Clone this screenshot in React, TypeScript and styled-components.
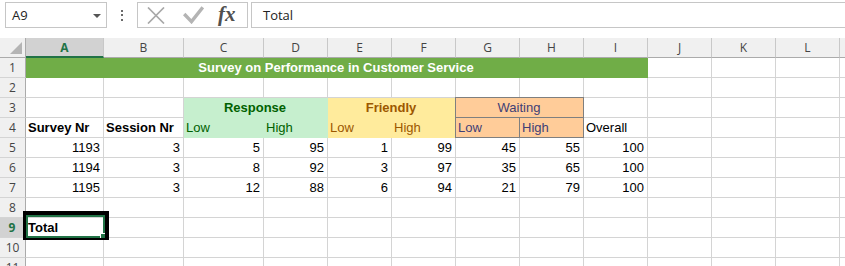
import React from "react";
import styled, { createGlobalStyle, css } from "styled-components";

const GlobalStyle = createGlobalStyle`
  html, body { margin: 0; padding: 0; background: #ffffff; overflow: hidden; }
  #root { width: 845px; height: 266px; overflow: hidden; }
`;

const Page = styled.div`
  width: 845px;
  height: 266px;
  overflow: hidden;
  background: #ffffff;
`;

/* ---------- formula bar ---------- */
const FormulaBar = styled.div`
  display: flex;
  align-items: flex-start;
  height: 38px;
  padding-top: 2px;
  box-sizing: border-box;
  font-family: "Open Sans", "Noto Sans", sans-serif;
`;

const NameBox = styled.div`
  margin-left: 5px;
  width: 102px;
  height: 26px;
  box-sizing: border-box;
  border: 1px solid #c6c6c6;
  display: flex;
  align-items: center;
  justify-content: space-between;
  padding: 0 5px 0 6px;
  font-size: 13px;
  color: #222;
`;

const DropArrow = styled.span`
  width: 0;
  height: 0;
  border-left: 4px solid transparent;
  border-right: 4px solid transparent;
  border-top: 4px solid #555;
  margin-top: 1px;
`;

const Grip = styled.div`
  width: 30px;
  height: 26px;
  display: flex;
  flex-direction: column;
  align-items: center;
  justify-content: center;
  gap: 2.5px;
`;

const GripDot = styled.span`
  width: 2px;
  height: 2px;
  background: #6a6a6a;
`;

const ButtonBox = styled.div`
  width: 111px;
  height: 26px;
  box-sizing: border-box;
  border: 1px solid #c6c6c6;
  display: flex;
  align-items: center;
  padding-left: 9px;
`;

const IconSlot = styled.span<{ $w: number }>`
  width: ${(p) => p.$w}px;
  display: flex;
  align-items: center;
`;

const Fx = styled.span`
  font-family: "Liberation Serif", "DejaVu Serif", serif;
  font-style: italic;
  font-weight: 700;
  font-size: 21px;
  color: #505050;
  line-height: 1;
  margin-top: -2px;
`;

const FormulaInput = styled.div`
  flex: 1;
  margin-left: 3px;
  margin-right: -3px;
  height: 26px;
  box-sizing: border-box;
  border: 1px solid #c6c6c6;
  display: flex;
  align-items: center;
  padding-left: 11px;
  font-size: 13px;
  color: #222;
`;

/* ---------- sheet grid ---------- */
const Sheet = styled.div`
  position: relative;
  display: grid;
  grid-template-columns: 26px 78px 80px 80px repeat(10, 64px);
  grid-auto-rows: 20px;
  width: 904px;
`;

const HeaderBase = css`
  box-sizing: border-box;
  background: #f0f0f0;
  font-family: "Open Sans", "Noto Sans", sans-serif;
  font-size: 12px;
  color: #444;
  display: flex;
  align-items: center;
  justify-content: center;
`;

const Corner = styled.div`
  ${HeaderBase};
  border-right: 1px solid #ababab;
  border-bottom: 1px solid #ababab;
  justify-content: flex-end;
  align-items: flex-end;
  padding: 0 3px 3px 0;
`;

const ColHeader = styled.div<{ $selected?: boolean }>`
  ${HeaderBase};
  border-right: 1px solid #c8c8c8;
  border-bottom: 1px solid #ababab;
  ${(p) =>
    p.$selected &&
    css`
      background: #d2d2d2;
      color: #217346;
      font-weight: 700;
      border-bottom: 2px solid #217346;
    `}
`;

const RowHeader = styled.div<{ $selected?: boolean }>`
  ${HeaderBase};
  border-right: 1px solid #ababab;
  border-bottom: 1px solid #d4d4d4;
  ${(p) =>
    p.$selected &&
    css`
      background: #d2d2d2;
      color: #217346;
      font-weight: 700;
      border-right: 2px solid #217346;
    `}
`;

type Variant = "plain" | "title" | "good" | "neutral" | "input";

const variantStyles: Record<Variant, ReturnType<typeof css>> = {
  plain: css``,
  title: css`
    background: #70ad47;
    color: #ffffff;
    border-color: transparent;
  `,
  good: css`
    background: #c6efce;
    color: #006100;
    border-color: transparent;
  `,
  neutral: css`
    background: #ffeb9c;
    color: #9c5700;
    border-color: transparent;
  `,
  input: css`
    background: #ffcc99;
    color: #3f3f76;
    margin: -1px 0 0 -1px;
    border: 1px solid #7f7f7f;
  `,
};

const Cell = styled.div<{
  $align?: "left" | "right" | "center";
  $bold?: boolean;
  $span?: number;
  $variant?: Variant;
}>`
  box-sizing: border-box;
  border-right: 1px solid #d4d4d4;
  border-bottom: 1px solid #d4d4d4;
  padding: 0 3px 0 2px;
  display: flex;
  align-items: center;
  justify-content: ${(p) =>
    p.$align === "right" ? "flex-end" : p.$align === "center" ? "center" : "flex-start"};
  font-family: "Liberation Sans", Arial, sans-serif;
  font-size: 13px;
  font-weight: ${(p) => (p.$bold ? 700 : 400)};
  color: #000;
  white-space: nowrap;
  overflow: hidden;
  grid-column: span ${(p) => p.$span ?? 1};
  ${(p) => variantStyles[p.$variant ?? "plain"]};
`;

const Selection = styled.div`
  position: absolute;
  left: 23px;
  top: 173px;
  width: 86px;
  height: 29px;
  box-sizing: border-box;
  border-style: solid;
  border-color: #000;
  border-width: 4px 4px 2px 3px;
  box-shadow: inset 0 0 0 2px #217346;
  pointer-events: none;
`;

const FillHandle = styled.span`
  position: absolute;
  right: 0;
  bottom: 0;
  width: 4px;
  height: 4px;
  background: #217346;
  border-left: 1px solid #fff;
  border-top: 1px solid #fff;
`;

/* ---------- data ---------- */
const columns = ["A", "B", "C", "D", "E", "F", "G", "H", "I", "J", "K", "L"];

const numbers: number[][] = [
  [1193, 3, 5, 95, 1, 99, 45, 55, 100],
  [1194, 3, 8, 92, 3, 97, 35, 65, 100],
  [1195, 3, 12, 88, 6, 94, 21, 79, 100],
];

const Empties = ({ n, keyBase }: { n: number; keyBase: string }) => (
  <>
    {Array.from({ length: n }, (_, i) => (
      <Cell key={`${keyBase}-${i}`} />
    ))}
  </>
);

const CancelIcon = () => (
  <svg width="18" height="17" viewBox="0 0 18 17">
    <path d="M1 0.5 L17 16.5 M17 0.5 L1 16.5" stroke="#a8a8a8" strokeWidth="1.7" fill="none" />
  </svg>
);

const EnterIcon = () => (
  <svg width="21" height="18" viewBox="0 0 21 18">
    <path d="M1.2 8 L8.5 15.6 L19.8 1.2" stroke="#b4b4b4" strokeWidth="3.4" fill="none" strokeLinejoin="miter" />
  </svg>
);

const CornerTriangle = () => (
  <svg width="12" height="12" viewBox="0 0 12 12">
    <polygon points="12,0 12,12 0,12" fill="#b4b4b4" />
  </svg>
);

export default function App() {
  return (
    <Page>
      <GlobalStyle />
      <FormulaBar>
        <NameBox>
          <span>A9</span>
          <DropArrow />
        </NameBox>
        <Grip>
          <GripDot />
          <GripDot />
          <GripDot />
        </Grip>
        <ButtonBox>
          <IconSlot $w={36}>
            <CancelIcon />
          </IconSlot>
          <IconSlot $w={35}>
            <EnterIcon />
          </IconSlot>
          <IconSlot $w={24}>
            <Fx>fx</Fx>
          </IconSlot>
        </ButtonBox>
        <FormulaInput>Total</FormulaInput>
      </FormulaBar>

      <Sheet>
        <Corner>
          <CornerTriangle />
        </Corner>
        {columns.map((c) => (
          <ColHeader key={c} $selected={c === "A"}>
            {c}
          </ColHeader>
        ))}
        {/* partially visible next column */}
        <ColHeader />

        {/* row 1 */}
        <RowHeader>1</RowHeader>
        <Cell $span={9} $variant="title" $bold $align="center">
          Survey on Performance in Customer Service
        </Cell>
        <Empties n={4} keyBase="r1" />

        {/* row 2 */}
        <RowHeader>2</RowHeader>
        <Empties n={13} keyBase="r2" />

        {/* row 3 */}
        <RowHeader>3</RowHeader>
        <Empties n={2} keyBase="r3a" />
        <Cell $span={2} $variant="good" $bold $align="center">
          Response
        </Cell>
        <Cell $span={2} $variant="neutral" $bold $align="center">
          Friendly
        </Cell>
        <Cell $span={2} $variant="input" $align="center">
          Waiting
        </Cell>
        <Empties n={5} keyBase="r3b" />

        {/* row 4 */}
        <RowHeader>4</RowHeader>
        <Cell $bold>Survey Nr</Cell>
        <Cell $bold>Session Nr</Cell>
        <Cell $variant="good">Low</Cell>
        <Cell $variant="good">High</Cell>
        <Cell $variant="neutral">Low</Cell>
        <Cell $variant="neutral">High</Cell>
        <Cell $variant="input">Low</Cell>
        <Cell $variant="input">High</Cell>
        <Cell>Overall</Cell>
        <Empties n={4} keyBase="r4" />

        {/* rows 5-7 */}
        {numbers.map((row, r) => (
          <React.Fragment key={`n${r}`}>
            <RowHeader>{r + 5}</RowHeader>
            {row.map((v, i) => (
              <Cell key={i} $align="right">
                {v}
              </Cell>
            ))}
            <Empties n={4} keyBase={`n${r}`} />
          </React.Fragment>
        ))}

        {/* row 8 */}
        <RowHeader>8</RowHeader>
        <Empties n={13} keyBase="r8" />

        {/* row 9 */}
        <RowHeader $selected>9</RowHeader>
        <Cell $bold>Total</Cell>
        <Empties n={12} keyBase="r9" />

        {/* rows 10-11 */}
        <RowHeader>10</RowHeader>
        <Empties n={13} keyBase="r10" />
        <RowHeader>11</RowHeader>
        <Empties n={13} keyBase="r11" />

        <Selection>
          <FillHandle />
        </Selection>
      </Sheet>
    </Page>
  );
}
